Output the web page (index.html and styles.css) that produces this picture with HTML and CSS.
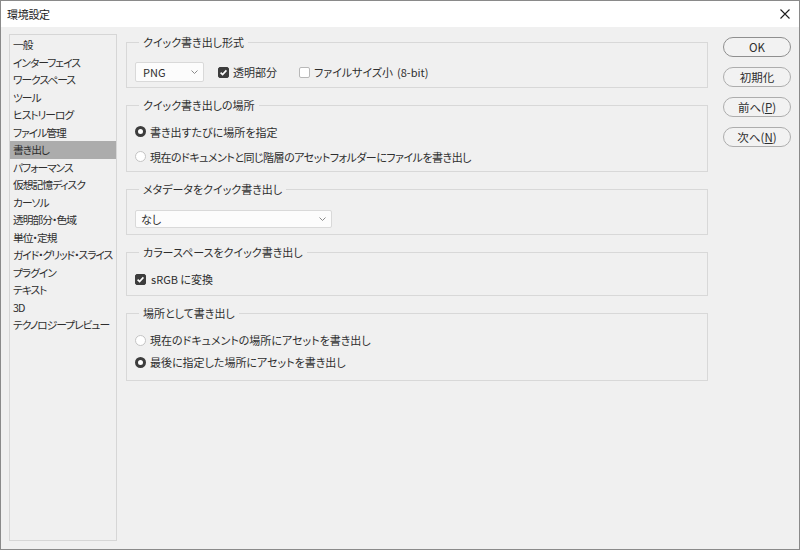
FILE: index.html
```html
<!DOCTYPE html>
<html lang="ja">
<head>
<meta charset="utf-8">
<title>環境設定</title>
<link rel="stylesheet" href="styles.css">
</head>
<body>
<div class="window">
  <div class="titlebar">
    <span class="title">環境設定</span>
    <svg class="close" width="10" height="10" viewBox="0 0 10 10"><path d="M0.5 0.5 L9.5 9.5 M9.5 0.5 L0.5 9.5" stroke="#1e1e1e" stroke-width="1.1" fill="none"/></svg>
  </div>
  <div class="content">
    <ul class="sidebar">
      <li>一般</li>
      <li>インターフェイス</li>
      <li>ワークスペース</li>
      <li>ツール</li>
      <li>ヒストリーログ</li>
      <li>ファイル管理</li>
      <li class="active">書き出し</li>
      <li>パフォーマンス</li>
      <li>仮想記憶ディスク</li>
      <li>カーソル</li>
      <li>透明部分・色域</li>
      <li>単位・定規</li>
      <li>ガイド・グリッド・スライス</li>
      <li>プラグイン</li>
      <li>テキスト</li>
      <li>3D</li>
      <li>テクノロジープレビュー</li>
    </ul>

    <div class="panels">
      <div class="group g1">
        <div class="legend">クイック書き出し形式</div>
        <div class="row">
          <div class="select sel-png"><span>PNG</span><svg class="chev" width="7" height="4" viewBox="0 0 7 4"><path d="M0.5 0.5 L3.5 3.5 L6.5 0.5" stroke="#8a8a8a" fill="none"/></svg></div>
          <label class="check on cb-first"><span class="box"><svg width="11" height="11" viewBox="0 0 11 11"><path d="M2.6 5.6 L4.6 7.6 L8.4 3.4" stroke="#fff" stroke-width="1.6" fill="none"/></svg></span>透明部分</label>
          <label class="check cb-second"><span class="box"></span>ファイルサイズ小<span class="bits">(8-bit)</span></label>
        </div>
      </div>

      <div class="group g2">
        <div class="legend">クイック書き出しの場所</div>
        <label class="radio on"><span class="dot"></span>書き出すたびに場所を指定</label>
        <label class="radio"><span class="dot"></span><span class="long">現在のドキュメントと同じ階層のアセットフォルダーにファイルを書き出し</span></label>
      </div>

      <div class="group g3">
        <div class="legend">メタデータをクイック書き出し</div>
        <div class="select sel-meta"><span>なし</span><svg class="chev" width="7" height="4" viewBox="0 0 7 4"><path d="M0.5 0.5 L3.5 3.5 L6.5 0.5" stroke="#8a8a8a" fill="none"/></svg></div>
      </div>

      <div class="group g4">
        <div class="legend">カラースペースをクイック書き出し</div>
        <label class="check on"><span class="box"><svg width="11" height="11" viewBox="0 0 11 11"><path d="M2.6 5.6 L4.6 7.6 L8.4 3.4" stroke="#fff" stroke-width="1.6" fill="none"/></svg></span>sRGB に変換</label>
      </div>

      <div class="group g5">
        <div class="legend">場所として書き出し</div>
        <label class="radio"><span class="dot"></span>現在のドキュメントの場所にアセットを書き出し</label>
        <label class="radio on"><span class="dot"></span>最後に指定した場所にアセットを書き出し</label>
      </div>
    </div>

    <div class="buttons">
      <button class="btn default">OK</button>
      <button class="btn">初期化</button>
      <button class="btn">前へ(<u>P</u>)</button>
      <button class="btn">次へ(<u>N</u>)</button>
    </div>
  </div>
</div>
</body>
</html>
```

FILE: styles.css
```css
* { box-sizing: border-box; }

html, body {
  margin: 0;
  padding: 0;
  background: #f0f0f0;
}

body {
  font-family: "Noto Sans CJK JP", "Noto Sans", sans-serif;
  font-size: 11px;
  color: #2e2e2e;
  font-feature-settings: "palt";
}

.window {
  width: 800px;
  height: 550px;
  border: 1px solid #8a8a8a;
  background: #f0f0f0;
  display: flex;
  flex-direction: column;
}

.titlebar {
  height: 26px;
  background: #ffffff;
  display: flex;
  align-items: center;
  justify-content: space-between;
  padding: 0 9px 0 6px;
  flex: none;
}

.title {
  font-size: 11px;
  letter-spacing: -0.3px;
  color: #1a1a1a;
  line-height: 16px;
}

.close { display: block; }

.content {
  display: flex;
  padding: 7px 7px 0 8px;
  flex: 1;
}

/* sidebar */
.sidebar {
  list-style: none;
  margin: 0;
  padding: 1px 0 0 0;
  width: 108px;
  height: 507px;
  border: 1px solid #d6d6d6;
  flex: none;
}

.sidebar li {
  height: 17.5px;
  line-height: 17.5px;
  padding-left: 3px;
  font-size: 10.75px;
  letter-spacing: -1px;
  white-space: nowrap;
}

.sidebar li.active {
  background: #acacac;
}

/* groups */
.panels {
  width: 582px;
  margin-left: 9px;
  margin-top: 8px;
  display: flex;
  flex-direction: column;
  gap: 17px;
  flex: none;
}

.group {
  position: relative;
  border: 1px solid #d8d8d8;
  padding-left: 8px;
}

.legend {
  position: absolute;
  top: -9px;
  left: 12px;
  padding: 0 4px;
  line-height: 16px;
  background: #f0f0f0;
  white-space: nowrap;
}

.g1 { height: 46px; padding-top: 19px; }
.g2 { height: 67px; padding-top: 13px; }
.g3 { height: 46px; padding-top: 20px; }
.g4 { height: 44px; padding-top: 18px; }
.g5 { height: 68px; padding-top: 15px; }

.row {
  display: flex;
  align-items: center;
}

.select {
  display: flex;
  align-items: center;
  justify-content: space-between;
  background: #fcfcfc;
  border: 1px solid #d9d9d9;
  border-radius: 2px;
  padding: 0 5px 0 7px;
}

.sel-png { width: 69px; height: 20px; }
.sel-meta { width: 197px; height: 18px; padding-left: 5px; }

.chev { display: block; }

.check {
  display: flex;
  align-items: center;
  height: 16px;
  white-space: nowrap;
}

.check .box {
  width: 11px;
  height: 11px;
  border: 1px solid #b8b8b8;
  background: #ffffff;
  border-radius: 2px;
  margin-right: 4px;
  flex: none;
  display: flex;
}

.check.on .box {
  background: #3d3d3d;
  border-color: #3d3d3d;
}

.check .box svg { display: block; margin: -1px; }

.bits { margin-left: 4px; }

.cb-first { margin-left: 14px; }
.cb-second { margin-left: 22px; }

.g4 .check .box { margin-right: 5px; }

.radio {
  display: flex;
  align-items: center;
  white-space: nowrap;
}

.long { letter-spacing: -0.5px; }

.g2 .radio { height: 25px; }
.g5 .radio { height: 22px; }

.radio .dot {
  width: 11px;
  height: 11px;
  border-radius: 50%;
  border: 1px solid #c4c4c4;
  background: #ffffff;
  margin-right: 4px;
  flex: none;
}

.radio.on .dot {
  border: 3.5px solid #3d3d3d;
  background: #ffffff;
}

/* buttons */
.buttons {
  width: 68px;
  margin-left: 15px;
  margin-top: 3px;
  display: flex;
  flex-direction: column;
  gap: 10px;
  flex: none;
}

.btn {
  height: 20px;
  border: 1px solid #adadad;
  border-radius: 10px;
  background: #f2f2f2;
  font-family: inherit;
  font-size: 11.5px;
  color: #2e2e2e;
  padding: 0;
  line-height: 16px;
  font-feature-settings: "palt";
}

.btn.default {
  border-color: #8f8f8f;
}
```
